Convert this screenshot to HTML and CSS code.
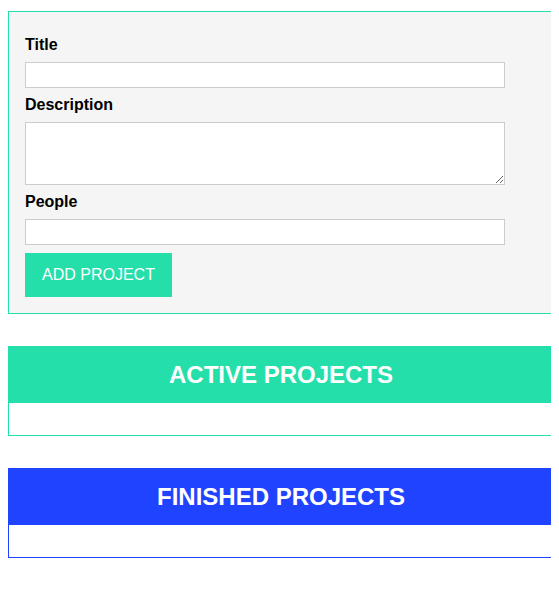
FILE: index.html
```html
<!DOCTYPE html>
<html>
<head>
<meta charset="utf-8">
<link rel="stylesheet" href="styles.css">
</head>
<body>
<form class="user-input">
  <div class="form-control">
    <label for="title">Title</label>
    <input type="text" id="title" class="text-input">
  </div>
  <div class="form-control">
    <label for="description">Description</label>
    <textarea id="description" class="text-area"></textarea>
  </div>
  <div class="form-control">
    <label for="people">People</label>
    <input type="text" id="people" class="text-input">
  </div>
  <button type="button" class="add-btn">ADD PROJECT</button>
</form>

<section class="projects active">
  <header class="projects-header"><h2>ACTIVE PROJECTS</h2></header>
  <ul class="projects-list"></ul>
</section>

<section class="projects finished">
  <header class="projects-header"><h2>FINISHED PROJECTS</h2></header>
  <ul class="projects-list"></ul>
</section>
</body>
</html>
```

FILE: styles.css
```css
* { box-sizing: border-box; }

body {
  margin: 8px;
  font-family: "Liberation Sans", Arial, sans-serif;
  background: #ffffff;
  color: #000;
}

.user-input {
  width: 546px;
  margin: 3px 0 0 0;
  padding: 24px 16px 16px;
  border: 1px solid #25dfab;
  background: #f5f5f5;
}

.form-control {
  margin-bottom: 8px;
}

.form-control label {
  display: block;
  font-weight: bold;
  font-size: 16px;
  line-height: 18px;
  margin-bottom: 8px;
}

.text-input,
.text-area {
  display: block;
  width: 480px;
  margin: 0;
  border: 1px solid #cccccc;
  background: #fff;
  font: inherit;
  padding: 2px 4px;
}

.text-input { height: 26px; }

.text-area {
  height: 63px;
  resize: vertical;
}

.add-btn {
  display: block;
  width: 147px;
  height: 44px;
  margin: 0;
  padding: 0;
  border: 1px solid #25dfab;
  background: #25dfab;
  color: #ffffff;
  font-family: "Liberation Sans", Arial, sans-serif;
  font-size: 16px;
  cursor: pointer;
}

.projects {
  width: 546px;
  margin-top: 32px;
  border: 1px solid #25dfab;
}

.projects-header {
  height: 56px;
  display: flex;
  align-items: center;
  justify-content: center;
  background: #25dfab;
  color: #ffffff;
}

.projects-header h2 {
  margin: 0;
  font-size: 24px;
  font-weight: bold;
  line-height: 28px;
}

.projects-list {
  list-style: none;
  margin: 0;
  padding: 0;
  height: 32px;
}

.finished { border-color: #1f43ff; }
.finished .projects-header { background: #1f43ff; }
```
